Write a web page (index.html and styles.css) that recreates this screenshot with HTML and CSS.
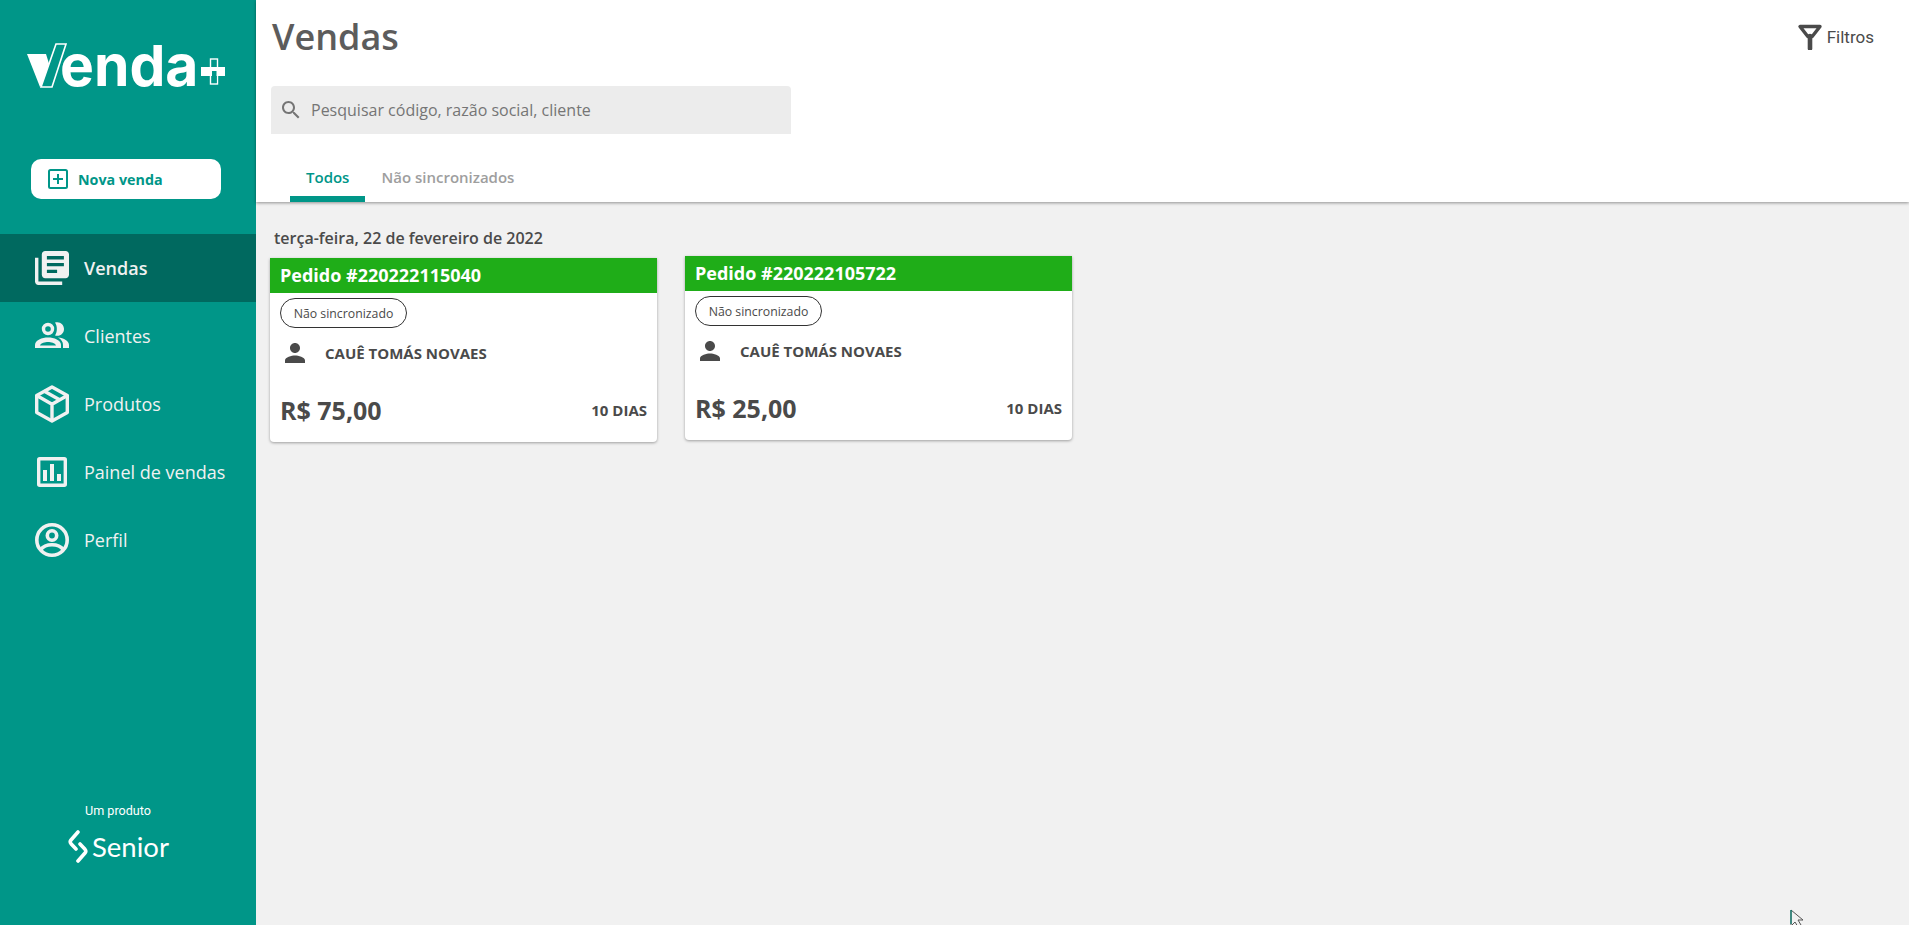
FILE: index.html
```html
<!DOCTYPE html>
<html lang="pt-BR">
<head>
<meta charset="utf-8">
<title>Vendas</title>
<link rel="stylesheet" href="styles.css">
</head>
<body>
<div class="app">
  <aside class="sidebar">
    <div class="logo">
      <svg class="logo-v" width="42" height="46" viewBox="0 0 42 46">
        <path d="M0 11H19L25 30L13 44Z" fill="#fff"/>
        <path d="M29 1H39L25 44H14Z" fill="#009688" stroke="#fff" stroke-width="1.6"/>
      </svg>
      <span class="logo-text">enda</span>
      <svg class="logo-plus" width="24" height="27" viewBox="0 0 24 27">
        <rect x="9.500" y="1" width="7" height="25" fill="#009688" stroke="#fff" stroke-width="1.400"/>
        <rect x="0" y="9" width="24" height="9" fill="#fff"/>
        <rect x="11" y="13" width="4.500" height="12" fill="#009688"/>
      </svg>
    </div>
    <button class="new-sale" type="button">
      <svg width="22" height="22" viewBox="0 0 22 22" fill="none" stroke="#009688" stroke-width="2">
        <rect x="2" y="2" width="18" height="18" rx="1.500"/>
        <path d="M11 6V16M6 11H16"/>
      </svg>
      <span>Nova venda</span>
    </button>
    <nav class="nav">
      <a class="nav-item is-active">
        <svg class="nav-icon" viewBox="2 2 20 20" fill="#f1f1f1"><path d="M4 6H2v14c0 1.100.9 2 2 2h14v-2H4V6zm16-4H8c-1.100 0-2 .9-2 2v12c0 1.100.9 2 2 2h12c1.100 0 2-.9 2-2V4c0-1.100-.9-2-2-2zm-1 9H9V9h10v2zm-4 4H9v-2h6v2zm4-8H9V5h10v2z"/></svg>
        <span>Vendas</span>
      </a>
      <a class="nav-item">
        <svg class="nav-icon" viewBox="0 0 34 34">
          <circle cx="13" cy="10" r="4.500" fill="none" stroke="#f1f1f1" stroke-width="3.400"/>
          <path d="M20 3.500C25 2 29 5.500 29 10C29 14.500 25 18 20 16.500C22.500 13 22.500 7 20 3.500Z" fill="#f1f1f1"/>
          <path d="M0 29V26C0 21 7 18.500 13 18.500C19 18.500 26 21 26 26V29ZM5 26.500H21C20 23.800 16 23 13 23C10 23 6 23.800 5 26.500Z" fill="#f1f1f1" fill-rule="evenodd"/>
          <path d="M23 18.500C29 19 34 22 34 26V29H28V26C28 23 26.500 20.500 23 18.500Z" fill="#f1f1f1"/>
        </svg>
        <span>Clientes</span>
      </a>
      <a class="nav-item">
        <svg class="nav-icon nav-icon-box" viewBox="0 0 34 38" fill="none" stroke="#f1f1f1" stroke-width="3.400" stroke-linejoin="round">
          <path d="M17 1.900L32.300 10.500V27.500L17 36.100L1.700 27.500V10.500Z"/>
          <path d="M1.700 10.500L17 19.300L32.300 10.500M17 19.300V36.100M9 6L25 15"/>
        </svg>
        <span>Produtos</span>
      </a>
      <a class="nav-item">
        <svg class="nav-icon" viewBox="0 0 34 34" fill="none" stroke="#f1f1f1">
          <rect x="3.700" y="3.700" width="26.600" height="26.600" rx="1" stroke-width="3.400"/>
          <path d="M10 15V26M17 9V26M24 19V26" stroke-width="4"/>
        </svg>
        <span>Painel de vendas</span>
      </a>
      <a class="nav-item">
        <svg class="nav-icon" viewBox="0 0 34 34" fill="none" stroke="#f1f1f1" stroke-width="3.600">
          <circle cx="17" cy="17" r="15.200"/>
          <circle cx="17" cy="12.500" r="4.700"/>
          <path d="M5.500 27C8 23.500 12.500 21.800 17 21.800C21.500 21.800 26 23.500 28.500 27"/>
        </svg>
        <span>Perfil</span>
      </a>
    </nav>
    <div class="brand">
      <div class="brand-label">Um produto</div>
      <div class="brand-row">
        <svg width="20" height="33" viewBox="0 0 20 33" fill="none" stroke="#fff" stroke-width="3.600" stroke-linecap="round" stroke-linejoin="round">
          <path d="M10 2L3 10C2 11.200 2 12.500 3 13.700L8 19"/>
          <path d="M10 31L17 23C18 21.800 18 20.500 17 19.300L12 14"/>
        </svg>
        <span>Senior</span>
      </div>
    </div>
  </aside>
  <main class="main">
    <header class="topbar">
      <div class="title-row">
        <h1 class="title">Vendas</h1>
        <div class="filters">
          <svg width="26" height="26" viewBox="0 0 26 26" fill="none" stroke="#4a4a4a" stroke-width="3.400" stroke-linejoin="round">
            <path d="M3 2.500H23L15.200 12.500H10.800Z"/>
            <path d="M13 12V24.500" stroke-width="4.600" stroke-linecap="round"/>
          </svg>
          <span>Filtros</span>
        </div>
      </div>
      <div class="search">
        <svg width="24" height="24" viewBox="0 0 24 24" fill="#757575"><path d="M15.500 14h-.79l-.28-.27C15.410 12.590 16 11.110 16 9.500 16 5.910 13.090 3 9.500 3S3 5.910 3 9.500 5.910 16 9.500 16c1.610 0 3.090-.59 4.230-1.570l.27.28v.79l5 4.990L20.490 19l-4.990-5zm-6 0C7.010 14 5 11.990 5 9.500S7.010 5 9.500 5 14 7.010 14 9.500 11.990 14 9.500 14z"/></svg>
        <span>Pesquisar código, razão social, cliente</span>
      </div>
      <div class="tabs">
        <div class="tab is-active">Todos</div>
        <div class="tab">Não sincronizados</div>
      </div>
    </header>
    <section class="content">
      <div class="date">terça-feira, 22 de fevereiro de 2022</div>
      <div class="cards">
        <article class="card card-low">
          <div class="card-head">Pedido #220222115040</div>
          <div class="chip">Não sincronizado</div>
          <div class="customer">
            <svg width="30" height="30" viewBox="0 0 24 24" fill="#4a4a4a"><path d="M12 12c2.210 0 4-1.790 4-4s-1.790-4-4-4-4 1.790-4 4 1.790 4 4 4zm0 2c-2.670 0-8 1.340-8 4v2h16v-2c0-2.660-5.330-4-8-4z"/></svg>
            <span>CAUÊ TOMÁS NOVAES</span>
          </div>
          <div class="card-foot">
            <span class="price">R$ 75,00</span>
            <span class="term">10 DIAS</span>
          </div>
        </article>
        <article class="card">
          <div class="card-head">Pedido #220222105722</div>
          <div class="chip">Não sincronizado</div>
          <div class="customer">
            <svg width="30" height="30" viewBox="0 0 24 24" fill="#4a4a4a"><path d="M12 12c2.210 0 4-1.790 4-4s-1.790-4-4-4-4 1.790-4 4 1.790 4 4 4zm0 2c-2.670 0-8 1.340-8 4v2h16v-2c0-2.660-5.330-4-8-4z"/></svg>
            <span>CAUÊ TOMÁS NOVAES</span>
          </div>
          <div class="card-foot">
            <span class="price">R$ 25,00</span>
            <span class="term">10 DIAS</span>
          </div>
        </article>
      </div>
    </section>
  </main>
</div>
<svg class="cursor" width="14" height="18" viewBox="0 0 14 18">
  <path d="M1 1V17L5 13L8 18L11 16L8 11H13Z" fill="#f1f1f1" stroke="#555" stroke-width="1"/>
  <path d="M1 1V15" stroke="#00796b" stroke-width="1.200"/>
</svg>
</body>
</html>
```

FILE: styles.css
```css
* { box-sizing: border-box; }
html, body { margin: 0; height: 100%; overflow: hidden; }
body { font-family: "Open Sans", "Liberation Sans", sans-serif; background: #f1f1f1; color: #4a4a4a; }
.app { display: flex; height: 925px; }

.sidebar { width: 256px; flex: none; background: #009688; color: #f1f1f1; display: flex; flex-direction: column; }
.logo { display: flex; align-items: flex-start; height: 46px; margin: 43px 0 0 27px; color: #fff; }
.logo-v { flex: none; }
.logo-text { font-family: Inter, "Open Sans", sans-serif; font-weight: 700; font-size: 57px; line-height: 46px; letter-spacing: 0; margin-left: -9px; height: 46px; }
.logo-plus { flex: none; margin: 15px 0 0 3px; }
.new-sale { display: flex; align-items: center; gap: 9px; width: 190px; height: 40px; margin: 70px 0 0 31px; padding: 0 0 0 16px; border: 0; border-radius: 10px; background: #fff; color: #009688; font: 700 14.300px "Open Sans", sans-serif; }
.nav { display: flex; flex-direction: column; margin-top: 35px; }
.nav-item { display: flex; align-items: center; gap: 15px; height: 68px; padding-left: 35px; font-size: 18px; color: #f1f1f1; }
.nav-item.is-active { background: #00695f; font-weight: 600; }
.nav-icon { width: 34px; height: 34px; flex: none; }
.nav-icon-box { height: 38px; }
.brand { margin-top: auto; padding: 0 0 62px 68px; color: #fff; }
.brand-label { font: 400 12.600px Roboto, sans-serif; margin: 0 0 12px 17px; }
.brand-row { display: flex; align-items: center; gap: 4px; height: 33px; font: 400 27.500px Lato, sans-serif; }

.main { flex: 1; min-width: 0; display: flex; flex-direction: column; }
.topbar { height: 202px; flex: none; background: #fff; padding: 0 0 0 14px; box-shadow: 0 1px 3px rgba(0,0,0,.4); display: flex; flex-direction: column; position: relative; }
.title-row { display: flex; justify-content: space-between; align-items: flex-start; height: 86px; padding-right: 35px; }
.title { margin: 12px 0 0 2px; font-size: 36px; line-height: 50px; font-weight: 600; color: #5c5c5c; }
.filters { display: flex; align-items: center; gap: 4px; margin-top: 24px; font: 400 17px Roboto, sans-serif; color: #4a4a4a; }
.search { display: flex; align-items: center; gap: 8px; width: 520px; height: 48px; margin-left: 1px; padding-left: 8px; background: #ececec; border-radius: 4px 4px 0 0; font-size: 16px; color: #757575; }
.tabs { display: flex; margin-top: auto; padding-left: 20px; }
.tab { height: 40px; padding: 5px 16px 0; font-size: 15px; font-weight: 600; color: #9e9e9e; }
.tab.is-active { color: #009688; border-bottom: 6px solid #009688; }

.content { padding: 25px 0 0 14px; }
.date { margin-left: 4px; font-size: 16px; line-height: 22px; font-weight: 600; color: #4a4a4a; height: 29px; }
.cards { display: flex; align-items: flex-start; gap: 28px; }
.card { width: 387px; height: 184px; background: #fff; border-radius: 0 0 4px 4px; box-shadow: 0 1px 3px rgba(0,0,0,.35); display: flex; flex-direction: column; }
.card-low { margin-top: 2px; }
.card-head { height: 35px; padding-left: 10px; background: #1fad18; color: #fff; font-size: 18px; font-weight: 700; line-height: 35px; }
.chip { align-self: flex-start; height: 30px; width: 127px; margin: 5px 0 0 10px; padding-top: 1px; border: 1px solid #333; border-radius: 15px; font-size: 12.300px; line-height: 28px; text-align: center; }
.customer { display: flex; align-items: center; gap: 15px; margin: 10px 0 0 10px; height: 30px; font-size: 15px; font-weight: 700; }
.card-foot { display: flex; justify-content: space-between; align-items: center; margin-top: auto; padding: 0 10px 14px 10px; }
.price { font-size: 25px; font-weight: 700; line-height: 36px; }
.term { font-size: 15px; font-weight: 700; }
.cursor { position: absolute; left: 1790px; top: 909px; }
```
